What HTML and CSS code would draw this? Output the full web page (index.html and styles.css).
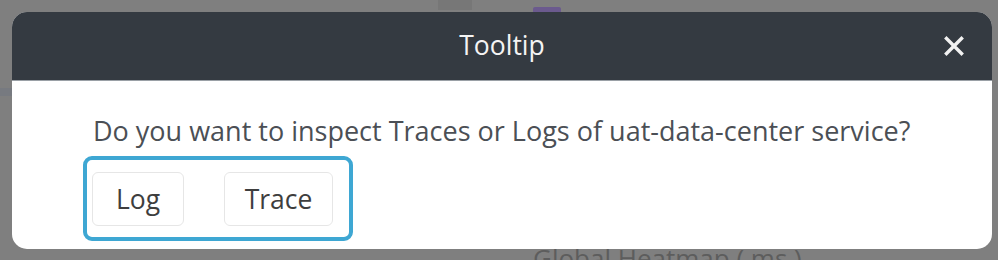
FILE: index.html
```html
<!DOCTYPE html>
<html>
<head>
<meta charset="utf-8">
<link rel="stylesheet" href="styles.css">
</head>
<body>
<div class="backdrop">
  <div class="bg-tab"></div>
  <div class="bg-pill"></div>
  <div class="bg-left"></div>
  <div class="bg-heatmap">Global Heatmap ( ms )</div>
</div>
<div class="modal">
  <div class="modal-header">
    <span class="modal-title">Tooltip</span>
    <button class="close" aria-label="Close">
      <svg width="20" height="20" viewBox="0 0 20 20"><path d="M2.5 2.5 L17.5 17.5 M17.5 2.5 L2.5 17.5" stroke="#f2f2f2" stroke-width="3.4" stroke-linecap="square"/></svg>
    </button>
  </div>
  <div class="modal-body">
    <p class="question">Do you want to inspect Traces or Logs of uat-data-center service?</p>
    <div class="choices">
      <button class="btn btn-log">Log</button>
      <button class="btn btn-trace">Trace</button>
    </div>
  </div>
</div>
</body>
</html>
```
FILE: styles.css
```css
html, body {
  margin: 0;
  padding: 0;
}
body {
  width: 998px;
  height: 260px;
  background: #7f7f7f;
  position: relative;
  overflow: hidden;
  font-family: "Open Sans", "Noto Sans", sans-serif;
}
.backdrop {
  position: absolute;
  inset: 0;
  overflow: hidden;
}
.bg-tab {
  position: absolute;
  left: 438px;
  top: 0;
  width: 34px;
  height: 10px;
  background: #777777;
}
.bg-pill {
  position: absolute;
  left: 533px;
  top: 7px;
  width: 28px;
  height: 5px;
  border-radius: 2px 2px 0 0;
  background: #6b5a8e;
}
.bg-left {
  position: absolute;
  left: 0;
  top: 88px;
  width: 12px;
  height: 8px;
  background: #777a80;
}
.bg-heatmap {
  position: absolute;
  left: 533px;
  top: 240px;
  font-size: 26px;
  line-height: 36px;
  color: #5d5d5d;
  white-space: nowrap;
}
.modal {
  position: absolute;
  left: 12px;
  top: 12px;
  width: 980px;
  height: 237px;
  border-radius: 15px;
  overflow: hidden;
  background: #ffffff;
  display: flex;
  flex-direction: column;
}
.modal-header {
  height: 69px;
  flex: none;
  background: #343a41;
  display: flex;
  align-items: center;
  justify-content: center;
  position: relative;
  border-bottom: 1px solid #9aa0a6;
  box-sizing: border-box;
}
.modal-title {
  color: #f4f4f4;
  font-size: 26.5px;
  padding-bottom: 2px;
}
.close {
  position: absolute;
  right: 28px;
  top: 24px;
  background: none;
  border: 0;
  padding: 0;
  width: 20px;
  height: 20px;
  display: flex;
}
.modal-body {
  padding: 32px 0 0 81px;
}
.question {
  margin: 0;
  font-size: 27px;
  color: #4b4f55;
  line-height: 36px;
  letter-spacing: 0;
  white-space: nowrap;
}
.choices {
  box-sizing: border-box;
  margin-top: 7px;
  margin-left: -10px;
  width: 270px;
  height: 85px;
  border: 4px solid #3ea7d3;
  border-radius: 9px;
  display: flex;
  align-items: center;
  gap: 40px;
  padding: 0 0 0 5px;
}
.btn {
  font-family: inherit;
  font-size: 26.5px;
  color: #3e3e3e;
  background: #fff;
  border: 1.5px solid #e6e6e6;
  border-radius: 6px;
  height: 54px;
  padding: 0;
  flex: none;
}
.btn-log {
  width: 92px;
}
.btn-trace {
  width: 109px;
}
```
